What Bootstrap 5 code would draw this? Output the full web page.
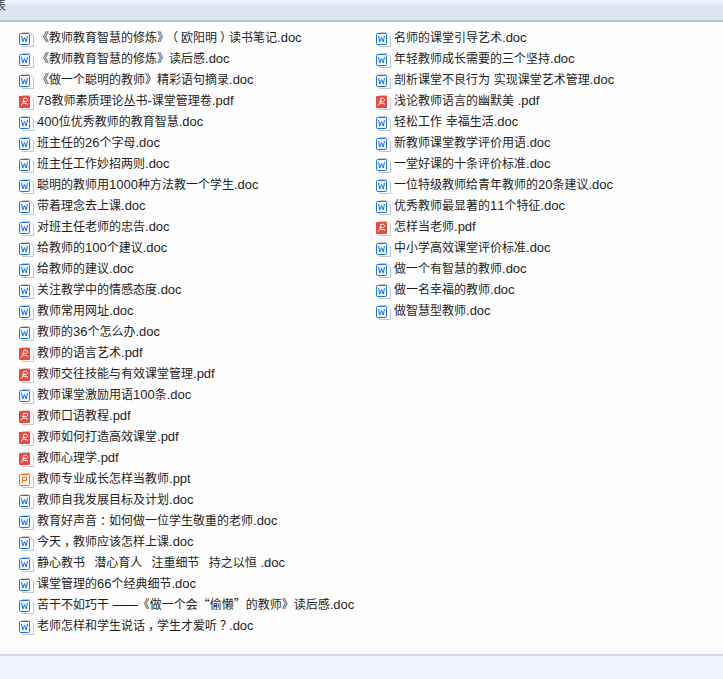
<!DOCTYPE html>
<html lang="zh-CN">
<head>
<meta charset="utf-8">
<title>教师文件列表</title>
<link href="https://cdn.jsdelivr.net/npm/bootstrap@5.3.0/dist/css/bootstrap.min.css" rel="stylesheet">
<style>
html,body{height:100%;}
body{background:#eff3fb;font-family:"Noto Sans CJK SC","Liberation Sans",sans-serif;font-size:12px;color:#1f1f1f;overflow:hidden;text-spacing-trim:space-all;font-kerning:none;}
.page-shell{height:679px;}
.top-bar{height:22px;background:linear-gradient(#eaf3fa 0,#e6f0f9 4px,#dbe6f4 5px,#dbe6f4 19px);border-bottom:2px solid #b4c0d2;overflow:hidden;line-height:14px;}
.top-label{margin-left:-6px;font-size:12px;margin-top:-2px;color:#333;}
.file-area{height:634px;background:#fdfdfd;border-bottom:2px solid #cfdbec;padding:5px 0 0 19px;}
.file-col{width:357px;flex:none;list-style:none;margin:0;padding:0;}
.file-row{height:21px;white-space:pre;}
.file-row svg{width:15px;height:16px;flex:none;margin:2px 3px 0 0;}
.lat{font-family:"Liberation Sans",sans-serif;font-size:13px;font-weight:400;}
.dbl{word-spacing:1px;}
.dash-run{font-family:"Liberation Sans",sans-serif;font-size:12.5px;}
.pnc{display:inline-block;width:12px;text-align:center;font-feature-settings:"halt";}
</style>
</head>
<body>
<svg width="0" height="0" class="d-none" aria-hidden="true">
  <symbol id="ic-doc" viewBox="0 0 15 16">
    <path d="M3.5 1.5H11L14.5 5V15.5H3.5Z" fill="#fff" stroke="#c2c6cc"/>
    <rect x=".5" y="2.5" width="10" height="11" rx="1" fill="#f1f7ff" stroke="#1b74e4"/>
    <path d="M2.5 5L3.8 11 5.5 6.5 7.2 11 8.5 5" fill="none" stroke="#1b74e4"/>
  </symbol>
  <symbol id="ic-pdf" viewBox="0 0 15 16">
    <path d="M3.5 1.5H11L14.5 5V15.5H3.5Z" fill="#fff" stroke="#c9c9c9"/>
    <rect x="0" y="2" width="11" height="12" rx="1" fill="#ea4a3c"/>
    <path d="M2 11.5C4 9.500 5.500 7 4.500 4.500 7.500 3.500 9 5 8.500 6.500 8 8 4.500 8 3 7M4.500 9.500C6 9 8 9.500 9 10.500" fill="none" stroke="#fff"/>
  </symbol>
  <symbol id="ic-ppt" viewBox="0 0 15 16">
    <path d="M3.5 1.500H11L14.500 5V15.500H3.500Z" fill="#fff" stroke="#c2c6cc"/>
    <rect x=".5" y="2.500" width="10" height="11" rx="1" fill="#fff6ee" stroke="#e8741c"/>
    <path d="M3.500 11V5H7.500V8.500H3.500" fill="none" stroke="#e8741c"/>
  </symbol>
</svg>
<div class="page-shell d-flex flex-column">
  <div class="top-bar"><div class="top-label">表</div></div>
  <div class="file-area d-flex">
    <ul class="file-col">
      <li class="file-row d-flex align-items-center"><svg><use href="#ic-doc"/></svg><span>《教师教育智慧的修炼》<span class="pnc">（</span>欧阳明<span class="pnc">）</span>读书笔记<span class="lat">.doc</span></span></li>
      <li class="file-row d-flex align-items-center"><svg><use href="#ic-doc"/></svg><span>《教师教育智慧的修炼》读后感<span class="lat">.doc</span></span></li>
      <li class="file-row d-flex align-items-center"><svg><use href="#ic-doc"/></svg><span>《做一个聪明的教师》精彩语句摘录<span class="lat">.doc</span></span></li>
      <li class="file-row d-flex align-items-center"><svg><use href="#ic-pdf"/></svg><span><span class="lat">78</span>教师素质理论丛书<span class="lat">-</span>课堂管理卷<span class="lat">.pdf</span></span></li>
      <li class="file-row d-flex align-items-center"><svg><use href="#ic-doc"/></svg><span><span class="lat">400</span>位优秀教师的教育智慧<span class="lat">.doc</span></span></li>
      <li class="file-row d-flex align-items-center"><svg><use href="#ic-doc"/></svg><span>班主任的<span class="lat">26</span>个字母<span class="lat">.doc</span></span></li>
      <li class="file-row d-flex align-items-center"><svg><use href="#ic-doc"/></svg><span>班主任工作妙招两则<span class="lat">.doc</span></span></li>
      <li class="file-row d-flex align-items-center"><svg><use href="#ic-doc"/></svg><span>聪明的教师用<span class="lat">1000</span>种方法教一个学生<span class="lat">.doc</span></span></li>
      <li class="file-row d-flex align-items-center"><svg><use href="#ic-doc"/></svg><span>带着理念去上课<span class="lat">.doc</span></span></li>
      <li class="file-row d-flex align-items-center"><svg><use href="#ic-doc"/></svg><span>对班主任老师的忠告<span class="lat">.doc</span></span></li>
      <li class="file-row d-flex align-items-center"><svg><use href="#ic-doc"/></svg><span>给教师的<span class="lat">100</span>个建议<span class="lat">.doc</span></span></li>
      <li class="file-row d-flex align-items-center"><svg><use href="#ic-doc"/></svg><span>给教师的建议<span class="lat">.doc</span></span></li>
      <li class="file-row d-flex align-items-center"><svg><use href="#ic-doc"/></svg><span>关注教学中的情感态度<span class="lat">.doc</span></span></li>
      <li class="file-row d-flex align-items-center"><svg><use href="#ic-doc"/></svg><span>教师常用网址<span class="lat">.doc</span></span></li>
      <li class="file-row d-flex align-items-center"><svg><use href="#ic-doc"/></svg><span>教师的<span class="lat">36</span>个怎么办<span class="lat">.doc</span></span></li>
      <li class="file-row d-flex align-items-center"><svg><use href="#ic-pdf"/></svg><span>教师的语言艺术<span class="lat">.pdf</span></span></li>
      <li class="file-row d-flex align-items-center"><svg><use href="#ic-pdf"/></svg><span>教师交往技能与有效课堂管理<span class="lat">.pdf</span></span></li>
      <li class="file-row d-flex align-items-center"><svg><use href="#ic-doc"/></svg><span>教师课堂激励用语<span class="lat">100</span>条<span class="lat">.doc</span></span></li>
      <li class="file-row d-flex align-items-center"><svg><use href="#ic-pdf"/></svg><span>教师口语教程<span class="lat">.pdf</span></span></li>
      <li class="file-row d-flex align-items-center"><svg><use href="#ic-pdf"/></svg><span>教师如何打造高效课堂<span class="lat">.pdf</span></span></li>
      <li class="file-row d-flex align-items-center"><svg><use href="#ic-pdf"/></svg><span>教师心理学<span class="lat">.pdf</span></span></li>
      <li class="file-row d-flex align-items-center"><svg><use href="#ic-ppt"/></svg><span>教师专业成长怎样当教师<span class="lat">.ppt</span></span></li>
      <li class="file-row d-flex align-items-center"><svg><use href="#ic-doc"/></svg><span>教师自我发展目标及计划<span class="lat">.doc</span></span></li>
      <li class="file-row d-flex align-items-center"><svg><use href="#ic-doc"/></svg><span>教育好声音<span class="pnc">：</span>如何做一位学生敬重的老师<span class="lat">.doc</span></span></li>
      <li class="file-row d-flex align-items-center"><svg><use href="#ic-doc"/></svg><span>今天<span class="pnc">，</span>教师应该怎样上课<span class="lat">.doc</span></span></li>
      <li class="file-row d-flex align-items-center"><svg><use href="#ic-doc"/></svg><span>静心教书<span class="lat dbl">  </span>潜心育人<span class="lat dbl">  </span>注重细节<span class="lat dbl">  </span>持之以恒<span class="lat"> .doc</span></span></li>
      <li class="file-row d-flex align-items-center"><svg><use href="#ic-doc"/></svg><span>课堂管理的<span class="lat">66</span>个经典细节<span class="lat">.doc</span></span></li>
      <li class="file-row d-flex align-items-center"><svg><use href="#ic-doc"/></svg><span>苦干不如巧干<span class="lat"> </span><span class="dash-run">——</span>《做一个会“偷懒”的教师》读后感<span class="lat">.doc</span></span></li>
      <li class="file-row d-flex align-items-center"><svg><use href="#ic-doc"/></svg><span>老师怎样和学生说话<span class="pnc">，</span>学生才爱听<span class="pnc">？</span><span class="lat">.doc</span></span></li>
    </ul>
    <ul class="file-col">
      <li class="file-row d-flex align-items-center"><svg><use href="#ic-doc"/></svg><span>名师的课堂引导艺术<span class="lat">.doc</span></span></li>
      <li class="file-row d-flex align-items-center"><svg><use href="#ic-doc"/></svg><span>年轻教师成长需要的三个坚持<span class="lat">.doc</span></span></li>
      <li class="file-row d-flex align-items-center"><svg><use href="#ic-doc"/></svg><span>剖析课堂不良行为<span class="lat"> </span>实现课堂艺术管理<span class="lat">.doc</span></span></li>
      <li class="file-row d-flex align-items-center"><svg><use href="#ic-pdf"/></svg><span>浅论教师语言的幽默美<span class="lat"> .pdf</span></span></li>
      <li class="file-row d-flex align-items-center"><svg><use href="#ic-doc"/></svg><span>轻松工作<span class="lat"> </span>幸福生活<span class="lat">.doc</span></span></li>
      <li class="file-row d-flex align-items-center"><svg><use href="#ic-doc"/></svg><span>新教师课堂教学评价用语<span class="lat">.doc</span></span></li>
      <li class="file-row d-flex align-items-center"><svg><use href="#ic-doc"/></svg><span>一堂好课的十条评价标准<span class="lat">.doc</span></span></li>
      <li class="file-row d-flex align-items-center"><svg><use href="#ic-doc"/></svg><span>一位特级教师给青年教师的<span class="lat">20</span>条建议<span class="lat">.doc</span></span></li>
      <li class="file-row d-flex align-items-center"><svg><use href="#ic-doc"/></svg><span>优秀教师最显著的<span class="lat">11</span>个特征<span class="lat">.doc</span></span></li>
      <li class="file-row d-flex align-items-center"><svg><use href="#ic-pdf"/></svg><span>怎样当老师<span class="lat">.pdf</span></span></li>
      <li class="file-row d-flex align-items-center"><svg><use href="#ic-doc"/></svg><span>中小学高效课堂评价标准<span class="lat">.doc</span></span></li>
      <li class="file-row d-flex align-items-center"><svg><use href="#ic-doc"/></svg><span>做一个有智慧的教师<span class="lat">.doc</span></span></li>
      <li class="file-row d-flex align-items-center"><svg><use href="#ic-doc"/></svg><span>做一名幸福的教师<span class="lat">.doc</span></span></li>
      <li class="file-row d-flex align-items-center"><svg><use href="#ic-doc"/></svg><span>做智慧型教师<span class="lat">.doc</span></span></li>
    </ul>
  </div>
</div>
<script src="https://cdn.jsdelivr.net/npm/bootstrap@5.3.0/dist/js/bootstrap.bundle.min.js"></script>
</body>
</html>
